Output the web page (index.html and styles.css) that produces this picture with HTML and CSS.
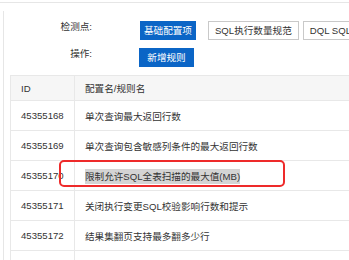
FILE: index.html
```html
<!DOCTYPE html>
<html>
<head>
    <title>检测规则配置</title>
    <meta name="viewport" content="width=device-width, initial-scale=1">
    <link rel="stylesheet" href="styles.css">
</head>
<body>
    <div class="topline"></div>
    <div class="panel">
        <div class="filters">
            <div class="filter-row">
                <span class="filter-label">检测点:</span>
                <div class="btn-group">
                    <button class="btn btn-primary">基础配置项</button>
                    <button class="btn">SQL执行数量规范</button>
                    <button class="btn">DQL SQL规范</button>
                </div>
            </div>
            <div class="filter-row">
                <span class="filter-label">操作:</span>
                <div class="btn-group">
                    <button class="btn btn-primary btn-add">新增规则</button>
                </div>
            </div>
        </div>
        <table class="rules">
            <thead>
                <tr>
                    <th class="col-id">ID</th>
                    <th>配置名/规则名</th>
                </tr>
            </thead>
            <tbody>
                <tr><td class="col-id">45355168</td><td>单次查询最大返回行数</td></tr>
                <tr><td class="col-id">45355169</td><td>单次查询包含敏感列条件的最大返回行数</td></tr>
                <tr><td class="col-id">45355170</td><td><span class="selected">限制允许SQL全表扫描的最大值(MB)</span></td></tr>
                <tr><td class="col-id">45355171</td><td>关闭执行变更SQL校验影响行数和提示</td></tr>
                <tr><td class="col-id">45355172</td><td>结果集翻页支持最多翻多少行</td></tr>
                <tr><td class="col-id">45355173</td><td>结果集是否支持翻页</td></tr>
            </tbody>
        </table>
    </div>
    <div class="mark"></div>
</body>
</html>
```

FILE: styles.css
```css
body {
    margin: 0;
    padding-top: 2px;
    width: 349px;
    height: 260px;
    overflow: hidden;
    background-color: white;
    font-family: "Liberation Sans", "Noto Sans CJK SC", sans-serif;
    font-size: 9.6px;
    color: #333;
    position: relative;
}
.topline {
    border-top: 1px solid #e6e6e6;
}
.panel {
    margin: 8px 0 0 3px;
    padding: 10px 0 0 6px;
    border-left: 1px solid #e6e6e6;
    height: 260px;
}
.filters {
    display: flex;
    flex-direction: column;
    gap: 8px;
}
.filter-row {
    display: flex;
    align-items: flex-start;
}
.filter-label {
    width: 82px;
    flex-shrink: 0;
    text-align: right;
    line-height: 12px;
    color: #333;
}
.btn-group {
    display: flex;
    flex-shrink: 0;
    margin-left: 48px;
}
.btn {
    height: 19px;
    padding: 0 6px;
    margin-right: 4px;
    border: 1px solid #c9c9c9;
    background-color: white;
    color: #333;
    font-family: inherit;
    font-size: 9.6px;
    line-height: 17px;
    white-space: nowrap;
    flex-shrink: 0;
    cursor: pointer;
}
.btn-primary {
    min-width: 55px;
    padding: 0 3px;
    margin-right: 12px;
    border-color: #0b65c6;
    background-color: #0b65c6;
    color: white;
}
.btn-add {
    margin-left: -1px;
}
.rules {
    margin-top: 8px;
    width: 420px;
    border-collapse: collapse;
    border: 1px solid #e8e8e8;
}
.rules th,
.rules td {
    padding: 0 0 0 10px;
    border: 1px solid #e8e8e8;
    text-align: left;
    font-weight: normal;
    white-space: nowrap;
}
.rules thead tr {
    height: 25px;
    background-color: #f6f6f6;
}
.rules tbody tr {
    height: 30px;
}
.rules .col-id {
    width: 53px;
}
.selected {
    background-color: #d4d4d4;
    padding: 2px 0;
}
.mark {
    position: absolute;
    left: 59px;
    top: 160px;
    width: 222px;
    height: 23px;
    border: 2px solid #ee2a2a;
    border-radius: 5px;
}
```
